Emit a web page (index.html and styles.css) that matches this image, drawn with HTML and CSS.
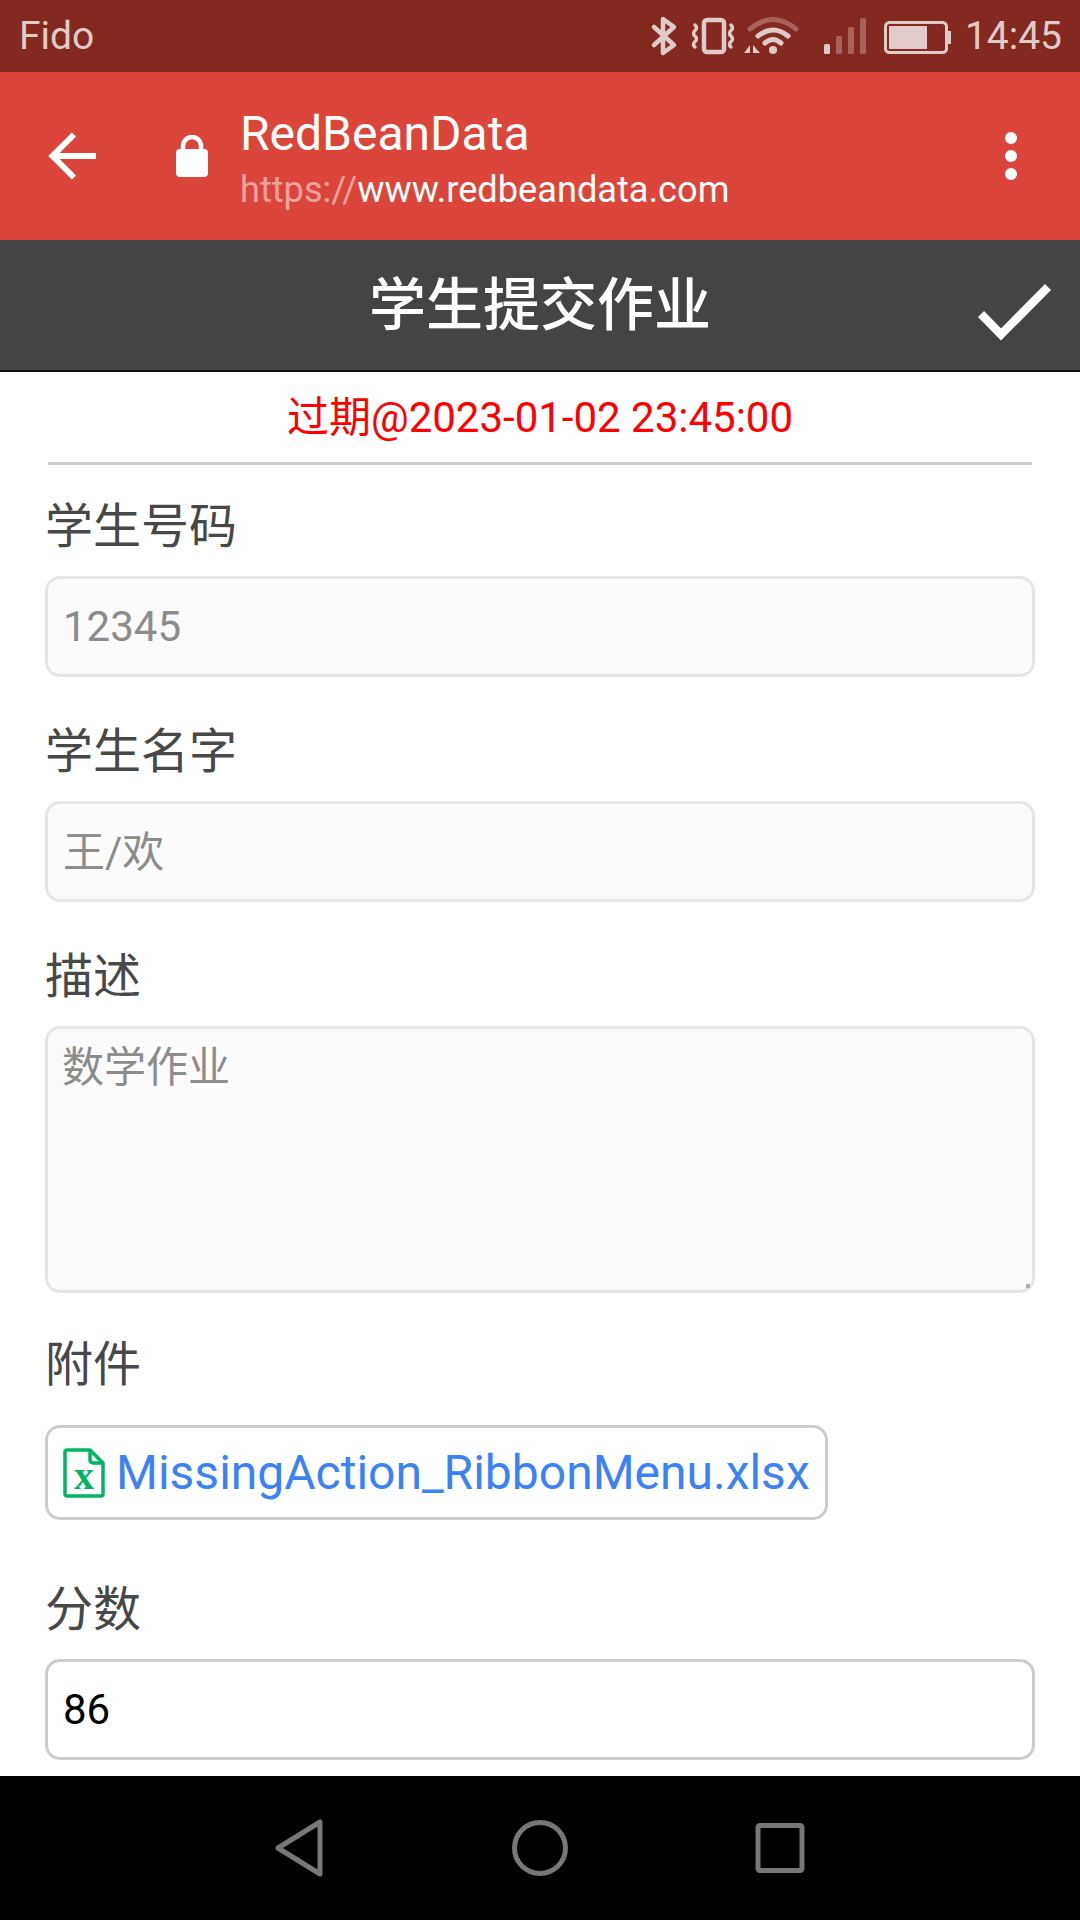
FILE: index.html
```html
<!DOCTYPE html>
<html lang="zh-CN">
<head>
<meta charset="utf-8">
<title>学生提交作业</title>
<link rel="stylesheet" href="styles.css">
</head>
<body>
<div class="phone">
  <div class="status">
    <span class="carrier">Fido</span>
    <div class="status-right">
      <svg class="ic-status" width="320" height="72" viewBox="0 0 320 72">
        <g transform="translate(-640 0)" fill="none" stroke="#e0cbca" stroke-width="4.5" stroke-linejoin="round" stroke-linecap="round">
          <path d="M654 27 L674 45 L663 53 V19 L674 27 L654 45"/>
          <rect x="704" y="20" width="20" height="32" rx="3"/>
          <path stroke-width="3.5" d="M695 25 q3 3 0 5.500 q-3 3 0 5.500 q3 3 0 5.500 q-3 3 0 5.500 M731 25 q3 3 0 5.500 q-3 3 0 5.500 q3 3 0 5.500 q-3 3 0 5.500"/>
          <path stroke="#a8625c" stroke-width="5" d="M750 29 Q773 10 796 29"/>
          <path stroke-width="5" d="M758 36 Q773 24 788 36 M765 43 Q773 36 781 43"/>
          <circle cx="773" cy="50" r="4" fill="#e0cbca" stroke="none"/>
          <path fill="#e0cbca" stroke="none" d="M750 45 V53 H744 Z M753 45 V53 H760 Z"/>
          <rect x="824" y="44" width="6" height="10" rx="1.500" fill="#e0cbca" stroke="none"/>
          <rect x="836" y="36" width="6" height="18" rx="1.500" fill="#a8625c" stroke="none"/>
          <rect x="848" y="27" width="6" height="27" rx="1.500" fill="#a8625c" stroke="none"/>
          <rect x="860" y="18" width="6" height="36" rx="1.500" fill="#a8625c" stroke="none"/>
          <rect x="885.500" y="22.500" width="61" height="30" rx="4" stroke-width="3"/>
          <rect x="889" y="26" width="38" height="23" fill="#e0cbca" stroke="none"/>
          <rect x="947.500" y="31" width="3.500" height="13" fill="#e0cbca" stroke="none"/>
        </g>
      </svg>
      <span class="clock">14:45</span>
    </div>
  </div>

  <div class="toolbar">
    <svg class="ic-back" width="48" height="48" viewBox="0 0 48 48">
      <path d="M26 2.500 L4.500 24 L26 45.500 M4.500 24 H48" fill="none" stroke="#fff" stroke-width="6"/>
    </svg>
    <svg class="ic-lock" width="32" height="42" viewBox="0 0 32 42">
      <path d="M7 16 V11 a9 9 0 0 1 18 0 V16" fill="none" stroke="#fff" stroke-width="4.500"/>
      <rect x="0" y="14" width="32" height="28" rx="4" fill="#fff"/>
    </svg>
    <div class="site">
      <div class="site-name">RedBeanData</div>
      <div class="site-url"><span class="scheme">https://</span>www.redbeandata.com</div>
    </div>
    <svg class="ic-more" width="12" height="48" viewBox="0 0 12 48">
      <circle cx="6" cy="6" r="6" fill="#fff"/>
      <circle cx="6" cy="24" r="6" fill="#fff"/>
      <circle cx="6" cy="42" r="6" fill="#fff"/>
    </svg>
  </div>

  <div class="header">
    <h1 class="title">学生提交作业</h1>
    <svg class="ic-check" width="76" height="60" viewBox="0 0 76 60">
      <path d="M3 31 L23 51.500 L70 4" fill="none" stroke="#fff" stroke-width="8.500"/>
    </svg>
  </div>

  <main class="content">
    <div class="overdue">过期@2023-01-02 23:45:00</div>
    <hr class="divider">
    <form class="form">
      <div class="field">
        <label class="label">学生号码</label>
        <input class="input" type="text" value="12345" disabled>
      </div>
      <div class="field">
        <label class="label">学生名字</label>
        <input class="input input-cjk" type="text" value="王/欢" disabled>
      </div>
      <div class="field">
        <label class="label">描述</label>
        <div class="area-wrap">
          <textarea class="input area" disabled>数学作业</textarea>
          <span class="grip"></span>
        </div>
      </div>
      <div class="field field-file">
        <label class="label">附件</label>
        <a class="file">
          <svg class="ic-xls" width="42" height="50" viewBox="0 0 42 50">
            <path d="M2 4 a2 2 0 0 1 2 -2 H27 L40 15 V46 a2 2 0 0 1 -2 2 H4 a2 2 0 0 1 -2 -2 Z M27 2 V12 a3 3 0 0 0 3 3 H40" fill="none" stroke="#00b566" stroke-width="3.500" stroke-linejoin="round"/>
            <text class="xls-x" x="21" y="41" text-anchor="middle">x</text>
          </svg>
          <span>MissingAction_RibbonMenu.xlsx</span>
        </a>
      </div>
      <div class="field">
        <label class="label">分数</label>
        <input class="input active" type="text" value="86">
      </div>
    </form>
  </main>

  <nav class="navbar">
    <svg width="54" height="60" viewBox="0 0 54 60">
      <path d="M5 30 L47 4 V56 Z" fill="none" stroke="#777" stroke-width="5" stroke-linejoin="round"/>
    </svg>
    <svg width="60" height="60" viewBox="0 0 60 60">
      <circle cx="30" cy="30" r="25.500" fill="none" stroke="#777" stroke-width="5"/>
    </svg>
    <svg width="54" height="54" viewBox="0 0 54 54">
      <rect x="5" y="4.500" width="44" height="45" rx="2" fill="none" stroke="#777" stroke-width="5"/>
    </svg>
  </nav>
</div>
</body>
</html>
```

FILE: styles.css
```css
* { box-sizing: border-box; }
html, body { margin: 0; padding: 0; }
body { font-family: Roboto, "Noto Sans CJK SC", sans-serif; background: #fff; }
.phone { width: 1080px; height: 1920px; display: flex; flex-direction: column; overflow: hidden; }

.status { height: 72px; flex: none; background: #832920; display: flex; align-items: center; justify-content: space-between; padding: 0 18px 0 19px; color: #e0cbca; font-size: 39px; }
.status-right { display: flex; align-items: center; }
.ic-status { display: block; margin-right: 5px; }
.carrier, .clock { line-height: 72px; }

.toolbar { height: 168px; flex: none; background: #dc4539; display: flex; align-items: center; padding: 0 0 0 48px; color: #fff; }
.ic-back { flex: none; }
.ic-lock { flex: none; margin-left: 80px; }
.site { flex: 1; margin-left: 32px; padding-top: 7px; }
.site-name { font-size: 48px; line-height: 60px; }
.site-url { font-size: 36.2px; line-height: 52px; }
.scheme { color: rgba(255,255,255,.5); }
.ic-more { flex: none; margin-right: 63px; }

.header { height: 132px; flex: none; background: #444; border-bottom: 2px solid #111; display: flex; align-items: center; justify-content: center; position: relative; }
.title { margin: 0; color: #fff; font-size: 57px; font-weight: 500; line-height: 1; }
.ic-check { position: absolute; right: 26px; top: 43px; }

.content { flex: 1; overflow: hidden; background: #fff; padding: 0 45px; min-height: 0; }
.overdue { color: #f00; font-size: 42px; text-align: center; line-height: 48px; padding-top: 22px; height: 90px; }
.divider { margin: 0 3px; border: 0; height: 3px; background: #ccc; }
.form { display: flex; flex-direction: column; }
.field { display: flex; flex-direction: column; }
.field + .field { margin-top: 13px; }
.field + .field-file { margin-top: 10px; }
.label { display: block; color: #484848; font-size: 48px; line-height: 60px; padding-top: 32px; padding-bottom: 19px; }
.input { display: block; width: 990px; height: 101px; padding: 0 15px; border: 3px solid #e6e6e6; border-radius: 15px; background: #fbfbfb; color: #8c8c8c; -webkit-text-fill-color: #8c8c8c; opacity: 1; font: 400 42px Roboto, "Noto Sans CJK SC", sans-serif; outline: 0; }
.input-cjk { padding-bottom: 6px; }
.area-wrap { position: relative; }
.area { height: 267px; padding: 4px 14px; resize: none; }
.grip { position: absolute; right: 5px; bottom: 5px; width: 4px; height: 4px; background: #aaa; border-radius: 1px; }
.active { background: #fff; border-color: #ccc; color: #000; -webkit-text-fill-color: #000; }
.file { display: inline-flex; align-items: center; align-self: flex-start; height: 95px; width: 783px; padding: 0 15px; border: 3px solid #ccc; border-radius: 15px; color: #3b82f6; font-size: 48px; margin-bottom: 15px; margin-top: 11px; white-space: nowrap; }
.ic-xls { flex: none; margin-right: 11px; }
.xls-x { font: 700 40px "Liberation Serif", serif; fill: #00b566; }

.navbar { height: 144px; flex: none; background: #000; display: flex; align-items: center; justify-content: space-between; padding: 0 273px; }
```
